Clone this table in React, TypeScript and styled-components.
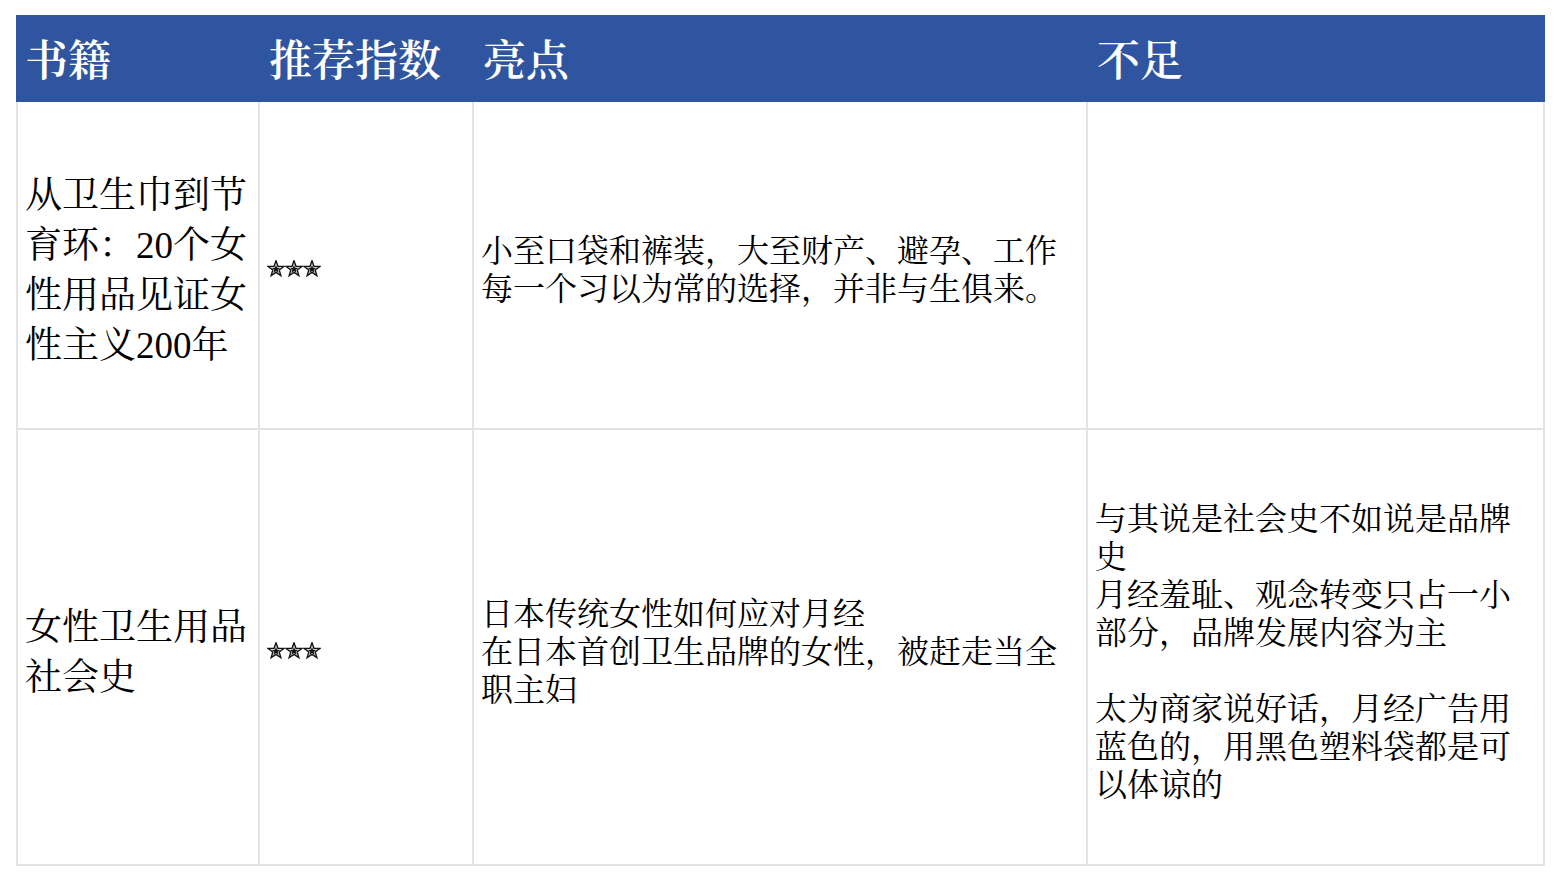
import React from "react";
import styled, { createGlobalStyle } from "styled-components";

const GlobalStyle = createGlobalStyle`
  html, body { margin: 0; padding: 0; background: #ffffff; }
  body {
    font-family: "Liberation Serif", "Noto Serif CJK SC", "Noto Sans CJK SC", serif;
    color: #000;
  }
`;

const Page = styled.div`
  width: 1560px;
  height: 882px;
  padding: 15px 0 0 16px;
  box-sizing: border-box;
`;

const Grid = styled.div`
  display: grid;
  width: 1529px;
  grid-template-columns: 244px 214px 614px 457px;
  grid-template-rows: 87px 328px 436px;
`;

const HeadCell = styled.div`
  background: #2f55a1;
  color: #ffffff;
  font-size: 43px;
  font-weight: 600;
  display: flex;
  align-items: center;
  padding: 6px 9px 0;
  box-sizing: border-box;
  white-space: nowrap;
  line-height: 1;
`;

const Cell = styled.div<{ $first?: boolean; $big?: boolean }>`
  box-sizing: border-box;
  border-right: 2px solid #e3e3e3;
  border-bottom: 2px solid #e3e3e3;
  border-left: ${(p) => (p.$first ? "2px solid #e3e3e3" : "none")};
  display: flex;
  align-items: center;
  padding: ${(p) => (p.$big ? "12px 7px 0" : "9px 7px 0")};
  font-size: ${(p) => (p.$big ? "37px" : "32px")};
  line-height: ${(p) => (p.$big ? "50px" : "38px")};
  word-break: break-all;
`;

const Text = styled.div`
  width: 100%;
`;

const Stars = styled.div`
  display: flex;
  align-items: center;
  margin-top: -2px;
`;

const StarSvg = styled.svg`
  width: 18px;
  height: 18px;
  display: block;
`;

const STAR =
  "M12 1 L14.65 8.36 L22.46 8.6 L16.28 13.39 L18.47 20.9 L12 16.5 L5.53 20.9 L7.72 13.39 L1.54 8.6 L9.35 8.36 Z";

const Star = () => (
  <StarSvg viewBox="0 0 24 24">
    <path d={STAR} fill="#d8dde6" stroke="#111" strokeWidth="1.8" strokeLinejoin="miter" />
    <path d={STAR} fill="#111" transform="translate(12 12.3) scale(0.52) translate(-12 -12)" />
  </StarSvg>
);

const Rating = () => (
  <Stars>
    <Star />
    <Star />
    <Star />
  </Stars>
);

export default function App() {
  return (
    <>
      <GlobalStyle />
      <Page>
        <Grid>
          <HeadCell>书籍</HeadCell>
          <HeadCell>推荐指数</HeadCell>
          <HeadCell>亮点</HeadCell>
          <HeadCell>不足</HeadCell>

          <Cell $first $big>
            <Text>从卫生巾到节育环：20个女性用品见证女性主义200年</Text>
          </Cell>
          <Cell>
            <Rating />
          </Cell>
          <Cell>
            <Text>
              小至口袋和裤装，大至财产、避孕、工作
              <br />
              每一个习以为常的选择，并非与生俱来。
            </Text>
          </Cell>
          <Cell>
            <Text />
          </Cell>

          <Cell $first $big>
            <Text>女性卫生用品社会史</Text>
          </Cell>
          <Cell>
            <Rating />
          </Cell>
          <Cell>
            <Text>
              日本传统女性如何应对月经
              <br />
              在日本首创卫生品牌的女性，被赶走当全职主妇
            </Text>
          </Cell>
          <Cell>
            <Text>
              与其说是社会史不如说是品牌史
              <br />
              月经羞耻、观念转变只占一小部分，品牌发展内容为主
              <br />
              <br />
              太为商家说好话，月经广告用蓝色的，用黑色塑料袋都是可以体谅的
            </Text>
          </Cell>
        </Grid>
      </Page>
    </>
  );
}
